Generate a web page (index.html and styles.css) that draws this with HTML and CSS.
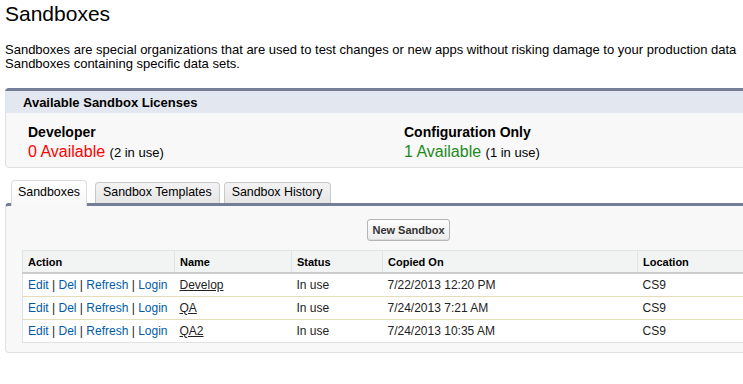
FILE: index.html
```html
<!DOCTYPE html>
<html>
<head>
<meta charset="utf-8">
<link rel="stylesheet" href="styles.css">
</head>
<body>
<div class="page">
  <h1 class="title">Sandboxes</h1>
  <p class="intro">Sandboxes are special organizations that are used to test changes or new apps without risking damage to your production data<br>Sandboxes containing specific data sets.</p>

  <section class="licenses">
    <div class="lic-head">Available Sandbox Licenses</div>
    <div class="lic-body">
      <div class="lic">
        <div class="lic-name">Developer</div>
        <div class="lic-count"><span class="avail none">0 Available</span> <span class="inuse">(2 in use)</span></div>
      </div>
      <div class="lic">
        <div class="lic-name">Configuration Only</div>
        <div class="lic-count"><span class="avail some">1 Available</span> <span class="inuse">(1 in use)</span></div>
      </div>
    </div>
  </section>

  <nav class="tabs">
    <div class="tab active tab-first">Sandboxes</div>
    <div class="tab tab-second">Sandbox Templates</div>
    <div class="tab">Sandbox History</div>
  </nav>

  <section class="tabpanel">
    <div class="btnrow"><button class="btn">New Sandbox</button></div>
    <table class="list">
      <colgroup>
        <col class="c-action"><col class="c-name"><col class="c-status"><col class="c-copied"><col>
      </colgroup>
      <thead>
        <tr><th>Action</th><th>Name</th><th>Status</th><th>Copied On</th><th>Location</th></tr>
      </thead>
      <tbody>
        <tr>
          <td><a class="act">Edit</a> | <a class="act">Del</a> | <a class="act">Refresh</a> | <a class="act">Login</a></td>
          <td><a class="nm">Develop</a></td><td>In use</td><td>7/22/2013 12:20 PM</td><td>CS9</td>
        </tr>
        <tr>
          <td><a class="act">Edit</a> | <a class="act">Del</a> | <a class="act">Refresh</a> | <a class="act">Login</a></td>
          <td><a class="nm">QA</a></td><td>In use</td><td>7/24/2013 7:21 AM</td><td>CS9</td>
        </tr>
        <tr>
          <td><a class="act">Edit</a> | <a class="act">Del</a> | <a class="act">Refresh</a> | <a class="act">Login</a></td>
          <td><a class="nm">QA2</a></td><td>In use</td><td>7/24/2013 10:35 AM</td><td>CS9</td>
        </tr>
      </tbody>
    </table>
  </section>
</div>
</body>
</html>
```

FILE: styles.css
```css
html, body {
  margin: 0;
  padding: 0;
  overflow: hidden;
  background: #fff;
}
body {
  font-family: "Liberation Sans", Arial, sans-serif;
  color: #000;
}
.page {
  width: 806px;
  padding: 0 5px;
}
.title {
  margin: 0;
  padding-top: 2px;
  font-size: 21px;
  line-height: 24px;
  font-weight: normal;
}
.intro {
  margin: 17px 0 0;
  font-size: 13px;
  line-height: 14px;
  white-space: nowrap;
}

/* licenses */
.licenses {
  margin-top: 17px;
  border-top: 3px solid #747e96;
  border-radius: 4px;
  overflow: hidden;
}
.lic-head {
  background: #e3e7ef;
  height: 22px;
  line-height: 23px;
  padding-left: 17px;
  font-size: 13px;
  font-weight: bold;
  border-left: 1px solid #dde1e8;
}
.lic-body {
  background: #f8f8f8;
  border: 1px solid #e0e0e0;
  border-top: none;
  border-radius: 0 0 4px 4px;
  padding: 9px 0 4px 22px;
  display: grid;
  grid-template-columns: 376px auto;
}
.lic-name {
  font-size: 14px;
  font-weight: bold;
  line-height: 20px;
}
.lic-count {
  line-height: 20px;
}
.avail {
  font-size: 16px;
}
.avail.none { color: #f00; }
.avail.some { color: #1e8a1e; }
.inuse {
  font-size: 13px;
}

/* tabs */
.tabs {
  margin-top: 12px;
  display: flex;
  align-items: flex-end;
  padding-left: 6px;
  height: 23px;
}
.tab {
  font-size: 12.4px;
  line-height: 15px;
  padding: 2px 7px 3px;
  background: linear-gradient(#f3f3f3, #e6e6e6);
  border: 1px solid #c9c9c9;
  border-bottom: none;
  border-radius: 4px 4px 0 0;
  margin-right: 4px;
}
.tab-first { margin-right: 8px; }
.tab.active {
  background: linear-gradient(#ffffff, #f8f8f8);
  border-color: #dcdcdc;
  padding: 4px 6px 6px;
  margin-bottom: -3px;
  position: relative;
  z-index: 1;
}

.tabpanel {
  border-top: 3px solid #747e96;
  border-left: 1px solid #e0e0e0;
  border-bottom: 1px solid #e0e0e0;
  border-radius: 4px 0 0 4px;
  background: #f8f8f8;
  padding: 13px 0 9px 16px;
}
.btnrow {
  display: flex;
  justify-content: center;
  padding-right: 16px;
}
.btn {
  font-family: "Liberation Sans", Arial, sans-serif;
  font-size: 11px;
  font-weight: bold;
  color: #333;
  height: 22px;
  padding: 0 4px;
  border: 1px solid #b5b5b5;
  border-radius: 3px;
  background: linear-gradient(#fdfdfd, #ececec);
  box-shadow: inset 0 -1px 0 #dcdcdc;
}

/* table */
.list {
  margin-top: 9px;
  width: 772px;
  border-collapse: collapse;
  background: #fff;
  border: 1px solid #e0e3e5;
  table-layout: fixed;
}
.c-action { width: 152px; }
.c-name { width: 117px; }
.c-status { width: 91px; }
.c-copied { width: 255px; }
.list th {
  background: #f2f3f3;
  text-align: left;
  font-size: 11px;
  font-weight: bold;
  line-height: 12px;
  padding: 5px 5px 4px;
  border-bottom: 2px solid #cccccc;
  border-left: 1px solid #e0e3e5;
}
.list th:first-child { border-left: none; }
.list td {
  font-size: 12px;
  line-height: 15px;
  padding: 4px 5px 3px;
  color: #222;
  border-top: 1px solid #e3deb8;
}
.list tbody tr:first-child td { border-top: none; }
.act { color: #015ba7; }
.nm {
  color: #222;
  text-decoration: underline;
}
```
